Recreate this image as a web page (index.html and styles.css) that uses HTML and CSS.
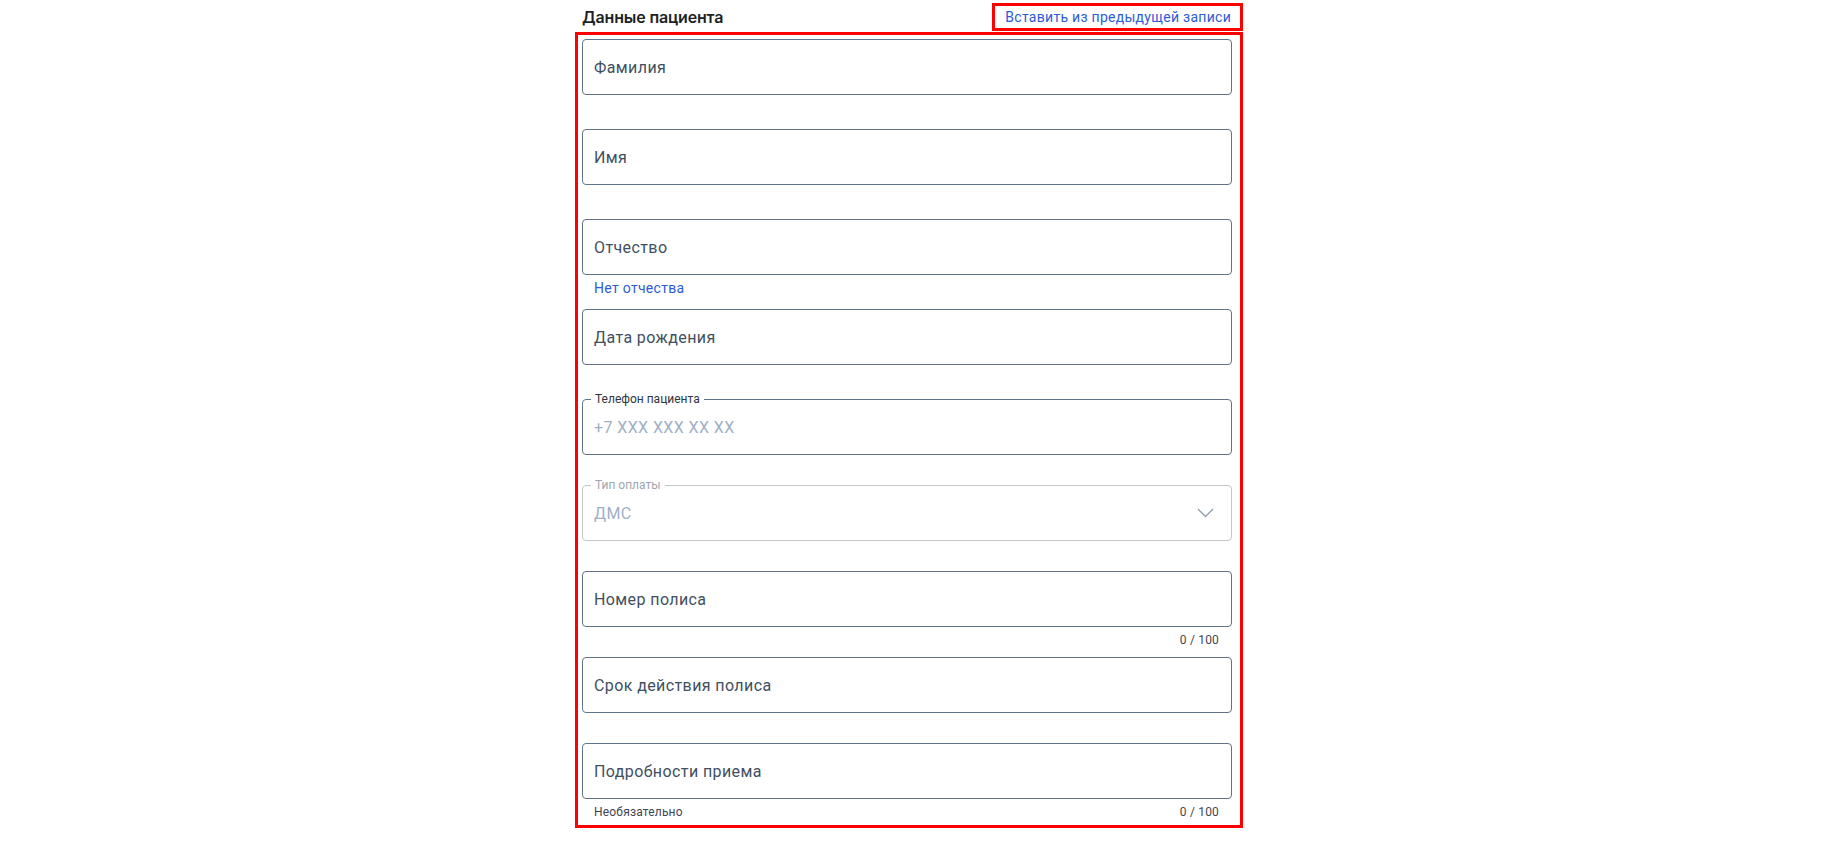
FILE: index.html
```html
<!DOCTYPE html>
<html lang="ru">
<head>
  <meta charset="UTF-8">
  <meta name="viewport" content="width=device-width, initial-scale=1.0">
  <title>Данные пациента</title>
  <link rel="stylesheet" href="styles.css">
</head>
<body>
  <div class="page">
    <div class="form-head">
      <h2 class="form-title">Данные пациента</h2>
      <button class="copy-btn" type="button">Вставить из предыдущей записи</button>
    </div>
    <div class="form-box">
      <div class="field field--spaced">
        <div class="control"><span class="label">Фамилия</span></div>
      </div>
      <div class="field field--spaced">
        <div class="control"><span class="label">Имя</span></div>
      </div>
      <div class="field field--tight">
        <div class="control"><span class="label">Отчество</span></div>
        <div class="helper"><a class="helper-link" href="#">Нет отчества</a></div>
      </div>
      <div class="field field--spaced">
        <div class="control"><span class="label">Дата рождения</span></div>
      </div>
      <fieldset class="field outlined">
        <legend>Телефон пациента</legend>
        <div class="outlined-value placeholder">+7 XXX XXX XX XX</div>
      </fieldset>
      <fieldset class="field outlined outlined--disabled">
        <legend>Тип оплаты</legend>
        <div class="outlined-value">
          <span>ДМС</span>
          <svg class="chevron" width="17" height="10" viewBox="0 0 17 10"><polyline points="1,1 8.5,8.5 16,1" fill="none" stroke="#8c9cb0" stroke-width="1.3"/></svg>
        </div>
      </fieldset>
      <div class="field field--helper">
        <div class="control"><span class="label">Номер полиса</span></div>
        <div class="helper helper--end">0 / 100</div>
      </div>
      <div class="field">
        <div class="control"><span class="label">Срок действия полиса</span></div>
      </div>
      <div class="field field--last">
        <div class="control"><span class="label">Подробности приема</span></div>
        <div class="helper helper--split"><span>Необязательно</span><span>0 / 100</span></div>
      </div>
    </div>
  </div>
</body>
</html>
```

FILE: styles.css
```css
body {
  margin: 0;
  font-family: Roboto, "Liberation Sans", sans-serif;
  background: #fff;
  color: #414f61;
}
.page {
  width: 668px;
  margin: 0 auto;
  padding-right: 29px;
}
.form-head {
  display: flex;
  justify-content: space-between;
  align-items: flex-start;
  height: 32px;
}
.form-title {
  margin: 7px 0 0 7px;
  font-family: Inter, Roboto, sans-serif;
  font-size: 16px;
  font-weight: 600;
  line-height: 20px;
  letter-spacing: -0.15px;
  color: #1d1f23;
}
.copy-btn {
  margin-top: 3px;
  height: 28px;
  padding: 0 9px 0 10px;
  border: 3px solid #ff0000;
  background: #fff;
  font-family: Roboto, sans-serif;
  font-size: 14px;
  letter-spacing: 0.28px;
  color: #2d5bd7;
  cursor: pointer;
}
.form-box {
  border: 3px solid #ff0000;
  padding: 4px 8px 3px 4px;
}
.field {
  margin: 0 0 30px;
}
.field--spaced {
  margin-bottom: 34px;
}
.field--tight {
  margin-bottom: 11px;
}
.field--helper {
  margin-bottom: 7px;
}
.field--last {
  margin-bottom: 0;
}
.control {
  box-sizing: border-box;
  height: 56px;
  border: 1px solid #617389;
  border-radius: 4px;
  padding: 0 11px;
  display: flex;
  align-items: center;
  font-size: 16px;
  letter-spacing: 0.4px;
}
.helper {
  margin-top: 3px;
  height: 20px;
  line-height: 20px;
  font-size: 12px;
  letter-spacing: 0.18px;
  color: #3f4650;
  padding: 0 13px 0 12px;
}
.helper--end {
  text-align: right;
}
.helper--split {
  display: flex;
  justify-content: space-between;
}
.helper-link {
  font-size: 14px;
  letter-spacing: 0.3px;
  color: #2d5bd7;
  text-decoration: none;
}
.outlined {
  margin-top: -7px;
  padding: 0 11px 6px;
  min-width: 0;
  border: 1px solid #617389;
  border-radius: 4px;
}
.outlined legend {
  margin-left: -3px;
  padding: 0 4px;
  font-size: 12px;
  line-height: 14px;
  color: #2f3540;
}
.outlined-value {
  height: 42px;
  display: flex;
  align-items: center;
  justify-content: space-between;
  font-size: 16px;
  letter-spacing: 0.4px;
}
.placeholder {
  color: #9eb0c5;
}
.outlined--disabled {
  border-color: #c4c6c8;
}
.outlined--disabled legend {
  color: #9ea6b0;
}
.outlined--disabled .outlined-value {
  color: #9eb0c5;
}
.chevron {
  margin-right: 6px;
}
```
